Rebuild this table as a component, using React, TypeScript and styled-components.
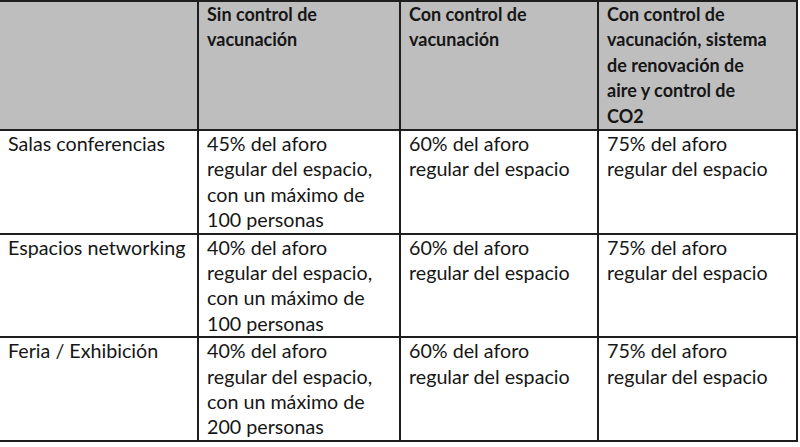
import React from 'react'
import styled, { createGlobalStyle } from 'styled-components'

const GlobalStyle = createGlobalStyle`
  html, body {
    margin: 0;
    padding: 0;
    background: #ffffff;
  }
  body {
    font-family: Lato, 'Open Sans', sans-serif;
    color: #161616;
    overflow: hidden;
  }
`

const Grid = styled.div`
  display: grid;
  grid-template-columns: 199px 202px 198px 199px;
  width: 800px;
  margin-left: -2px;
  border-left: 2px solid #1e1e1e;
  border-top: 2px solid #1e1e1e;
  box-sizing: border-box;
`

const Cell = styled.div<{ $head?: boolean; $lines: number }>`
  box-sizing: border-box;
  border-right: 2px solid #1e1e1e;
  border-bottom: 2px solid #1e1e1e;
  background: ${({ $head }) => ($head ? '#bebebe' : '#ffffff')};
  font-weight: ${({ $head }) => ($head ? 700 : 400)};
  font-size: ${({ $head }) => ($head ? 18 : 19.7)}px;
  line-height: 25.4px;
  padding: 0 4px 0 8px;
  height: ${({ $lines }) => $lines * 25.4 + 2}px;
  white-space: pre-line;
`

const head = [
  '',
  'Sin control de\nvacunación',
  'Con control de\nvacunación',
  'Con control de\nvacunación, sistema\nde renovación de\naire y control de\nCO2',
]

const rows = [
  [
    'Salas conferencias',
    '45% del aforo\nregular del espacio,\ncon un máximo de\n100 personas',
    '60% del aforo\nregular del espacio',
    '75% del aforo\nregular del espacio',
  ],
  [
    'Espacios networking',
    '40% del aforo\nregular del espacio,\ncon un máximo de\n100 personas',
    '60% del aforo\nregular del espacio',
    '75% del aforo\nregular del espacio',
  ],
  [
    'Feria / Exhibición',
    '40% del aforo\nregular del espacio,\ncon un máximo de\n200 personas',
    '60% del aforo\nregular del espacio',
    '75% del aforo\nregular del espacio',
  ],
]

const App: React.FC = () => {
  return (
    <>
      <GlobalStyle />
      <Grid>
        {head.map((h, i) => (
          <Cell key={`h-${i}`} $head $lines={5}>
            {h}
          </Cell>
        ))}
        {rows.map((row, r) =>
          row.map((c, i) => (
            <Cell key={`r-${r}-${i}`} $lines={4}>
              {c}
            </Cell>
          )),
        )}
      </Grid>
    </>
  )
}

export default App
